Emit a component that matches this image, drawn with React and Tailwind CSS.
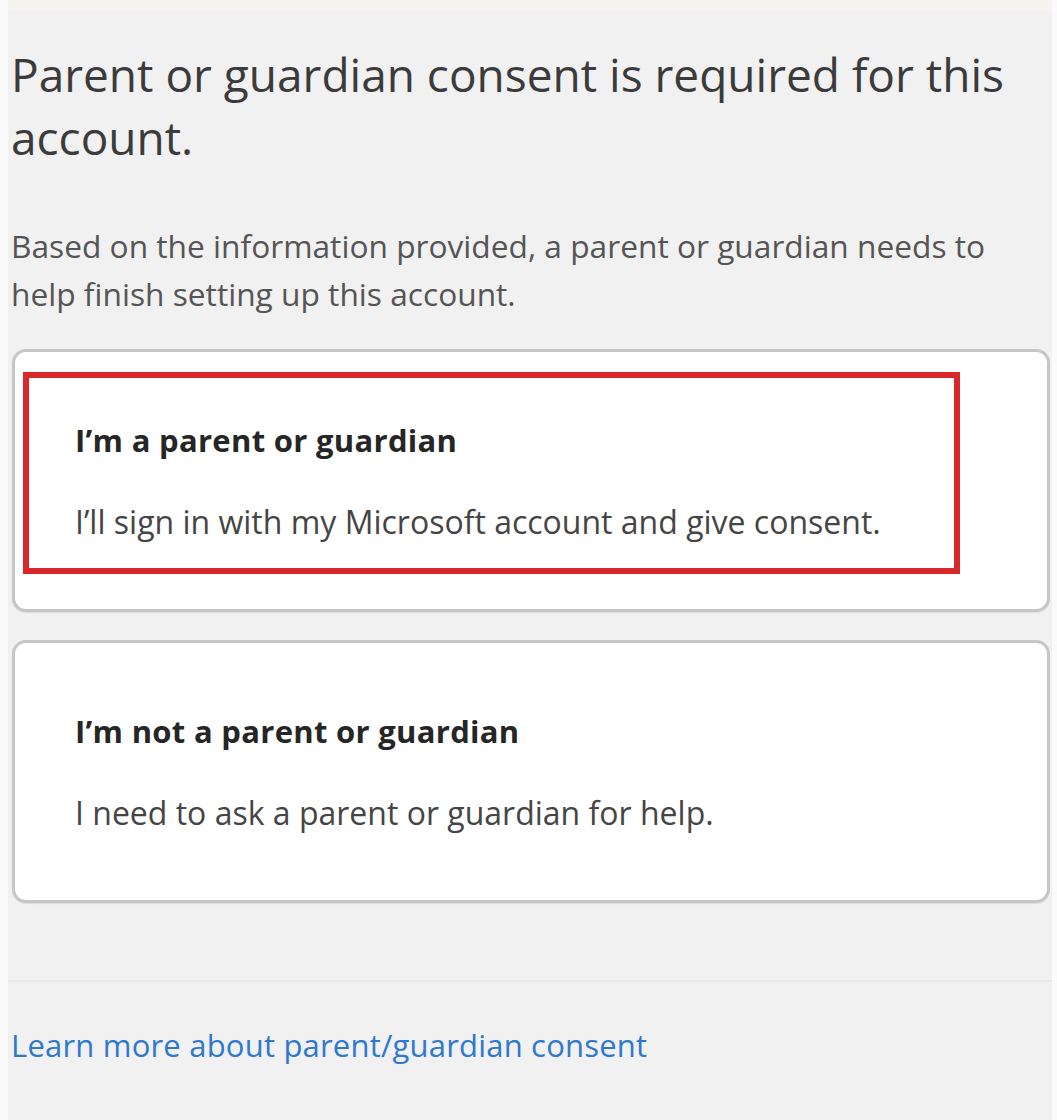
export default function App() {
  const font = { fontFamily: '"Open Sans", "Noto Sans", sans-serif' };
  return (
    <div className="flex h-[1120px] w-full bg-[#fafafa]" style={font}>
      <div className="ml-[8px] mr-[5px] flex flex-1 flex-col bg-[#f1f1f1]">
        <div className="h-[10px] bg-[#f6f4ef]" />
        <div className="flex flex-col px-[3px]">
          <h1 className="mt-[33px] text-[46px] leading-[63px] text-[#3b3b3b]">
            Parent or guardian consent is required for this account.
          </h1>
          <p className="mt-[53px] max-w-[1000px] text-[31.7px] leading-[48px] text-[#555555]">
            Based on the information provided, a parent or guardian needs to help finish setting up this account.
          </p>
        </div>

        <div className="mt-[31px] flex flex-col gap-[28px] pl-[4px] pr-[2px]">
          <OptionCard
            title="I’m a parent or guardian"
            desc="I’ll sign in with my Microsoft account and give consent."
            highlighted
          />
          <OptionCard
            title="I’m not a parent or guardian"
            desc="I need to ask a parent or guardian for help."
          />
        </div>

        <div className="mt-[77px] h-[2px] bg-[#e9e9e9]" />

        <a href="#" className="mt-[43px] px-[3px] text-[31px] leading-[40px] tracking-[0.2px] text-[#2f78d0]">
          Learn more about parent/guardian consent
        </a>
      </div>
    </div>
  );
}

function OptionCard({ title, desc, highlighted }) {
  return (
    <div className="relative flex h-[263px] flex-col justify-center rounded-[14px] border-[3px] border-[#c6c6c6] bg-white pl-[60px] shadow-[0_1px_1px_rgba(0,0,0,0.08)]">
      {highlighted && (
        <div className="absolute left-[8px] top-[20px] h-[202px] w-[937px] border-[6px] border-[#d8282a]" />
      )}
      <div className="text-[31px] font-bold leading-[40px] tracking-[0.3px] text-[#262626]">{title}</div>
      <div className="mt-[42px] text-[32px] leading-[40px] text-[#454545]">{desc}</div>
    </div>
  );
}
